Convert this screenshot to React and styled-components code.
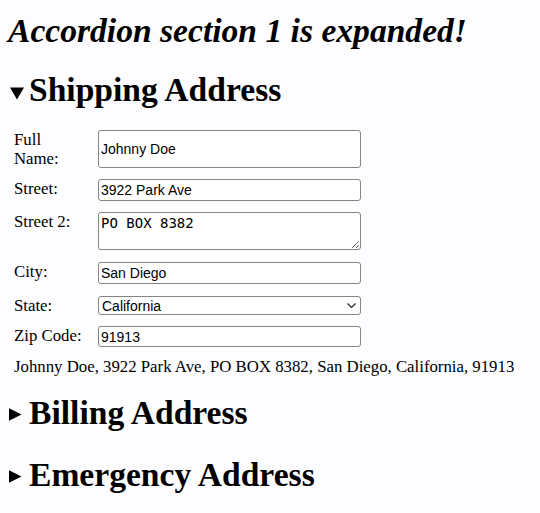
import React from "react";
import styled, { createGlobalStyle } from "styled-components";

const GlobalStyle = createGlobalStyle`
  html, body {
    margin: 0;
    padding: 0;
    background: #fdfcfe;
  }
  body {
    font-family: "Liberation Serif", "Times New Roman", serif;
    color: #000;
  }
`;

const Page = styled.div`
  padding: 12px 8px 20px;
`;

const Title = styled.h1`
  margin: 0;
  font-size: 33.6px;
  line-height: 38px;
  font-style: italic;
  font-weight: bold;
`;

const Section = styled.section`
  margin-top: ${(p) => p.$gap}px;
`;

const Header = styled.div`
  display: flex;
  align-items: flex-start;
  cursor: pointer;
`;

const Marker = styled.svg`
  flex: none;
  width: 15px;
  height: 15px;
  margin: 14px 5px 0 1px;
`;

const HeaderText = styled.h2`
  margin: 0;
  font-size: 33.6px;
  line-height: 38px;
  font-weight: bold;
`;

const Form = styled.form`
  display: flex;
  flex-direction: column;
  margin: 0;
  padding-left: 6px;
`;

const FieldRow = styled.div`
  display: grid;
  grid-template-columns: 70px 263px;
  column-gap: 14px;
  align-items: stretch;
  height: ${(p) => p.$h}px;
  margin-top: ${(p) => p.$gap}px;
`;

const Label = styled.label`
  font-size: 16.8px;
  line-height: 19px;
`;

const TextInput = styled.input`
  box-sizing: border-box;
  width: 100%;
  height: 100%;
  min-width: 0;
  margin: 0;
  padding: 0 2px;
  border: 1px solid #858585;
  border-radius: 3px;
  background: #fff;
  color: #000;
  font: 14px/16px "Liberation Sans", Arial, sans-serif;
  outline: none;
`;

const TextArea = styled.textarea`
  box-sizing: border-box;
  width: 100%;
  height: 100%;
  margin: 0;
  padding: 2px;
  border: 1px solid #858585;
  border-radius: 3px;
  background: #fff;
  color: #000;
  font: 14px/16px "DejaVu Sans Mono", "Liberation Mono", monospace;
  outline: none;
`;

const SelectWrap = styled.div`
  position: relative;
  display: flex;
`;

const Select = styled.select`
  appearance: none;
  box-sizing: border-box;
  width: 100%;
  height: 100%;
  margin: 0;
  padding: 0 3px;
  border: 1px solid #858585;
  border-radius: 3px;
  background: #fff;
  color: #000;
  font: 14px/16px "Liberation Sans", Arial, sans-serif;
  outline: none;
`;

const Chevron = styled.svg`
  position: absolute;
  right: 5px;
  top: 7px;
  width: 9px;
  height: 5px;
  pointer-events: none;
`;

const SummaryLine = styled.p`
  margin: 10px 0 0 6px;
  font-size: 16.8px;
  line-height: 19px;
`;

const Triangle = ({ open }) => (
  <Marker viewBox="0 0 15 15" aria-hidden="true">
    {open ? (
      <polygon points="1,2.5 15,2.5 8,14.5" fill="#000" />
    ) : (
      <polygon points="0,0.3 12.5,6.5 0,12.7" fill="#000" />
    )}
  </Marker>
);

const AccordionHeader = ({ open, children }) => (
  <Header>
    <Triangle open={open} />
    <HeaderText>{children}</HeaderText>
  </Header>
);

export default function App() {
  const data = {
    name: "Johnny Doe",
    street: "3922 Park Ave",
    street2: "PO BOX 8382",
    city: "San Diego",
    state: "California",
    zip: "91913",
  };
  const summary = [data.name, data.street, data.street2, data.city, data.state, data.zip].join(", ");

  return (
    <>
      <GlobalStyle />
      <Page>
        <Title>Accordion section 1 is expanded!</Title>

        <Section $gap={21}>
          <AccordionHeader open>Shipping Address</AccordionHeader>
          <Form onSubmit={(e) => e.preventDefault()}>
            <FieldRow $gap={21} $h={38}>
              <Label htmlFor="name">Full Name:</Label>
              <TextInput id="name" defaultValue={data.name} />
            </FieldRow>
            <FieldRow $gap={11} $h={22}>
              <Label htmlFor="street">Street:</Label>
              <TextInput id="street" defaultValue={data.street} />
            </FieldRow>
            <FieldRow $gap={11} $h={38}>
              <Label htmlFor="street2">Street 2:</Label>
              <TextArea id="street2" defaultValue={data.street2} />
            </FieldRow>
            <FieldRow $gap={12} $h={22}>
              <Label htmlFor="city">City:</Label>
              <TextInput id="city" defaultValue={data.city} />
            </FieldRow>
            <FieldRow $gap={12} $h={19}>
              <Label htmlFor="state">State:</Label>
              <SelectWrap>
                <Select id="state" defaultValue={data.state}>
                  <option>California</option>
                  <option>Nevada</option>
                  <option>Oregon</option>
                </Select>
                <Chevron viewBox="0 0 9 5" aria-hidden="true">
                  <polyline points="0.5,0.5 4.5,4.5 8.5,0.5" fill="none" stroke="#222" strokeWidth="1.1" />
                </Chevron>
              </SelectWrap>
            </FieldRow>
            <FieldRow $gap={11} $h={21}>
              <Label htmlFor="zip">Zip Code:</Label>
              <TextInput id="zip" defaultValue={data.zip} />
            </FieldRow>
          </Form>
          <SummaryLine>{summary}</SummaryLine>
        </Section>

        <Section $gap={18}>
          <AccordionHeader>Billing Address</AccordionHeader>
        </Section>

        <Section $gap={24}>
          <AccordionHeader>Emergency Address</AccordionHeader>
        </Section>
      </Page>
    </>
  );
}
